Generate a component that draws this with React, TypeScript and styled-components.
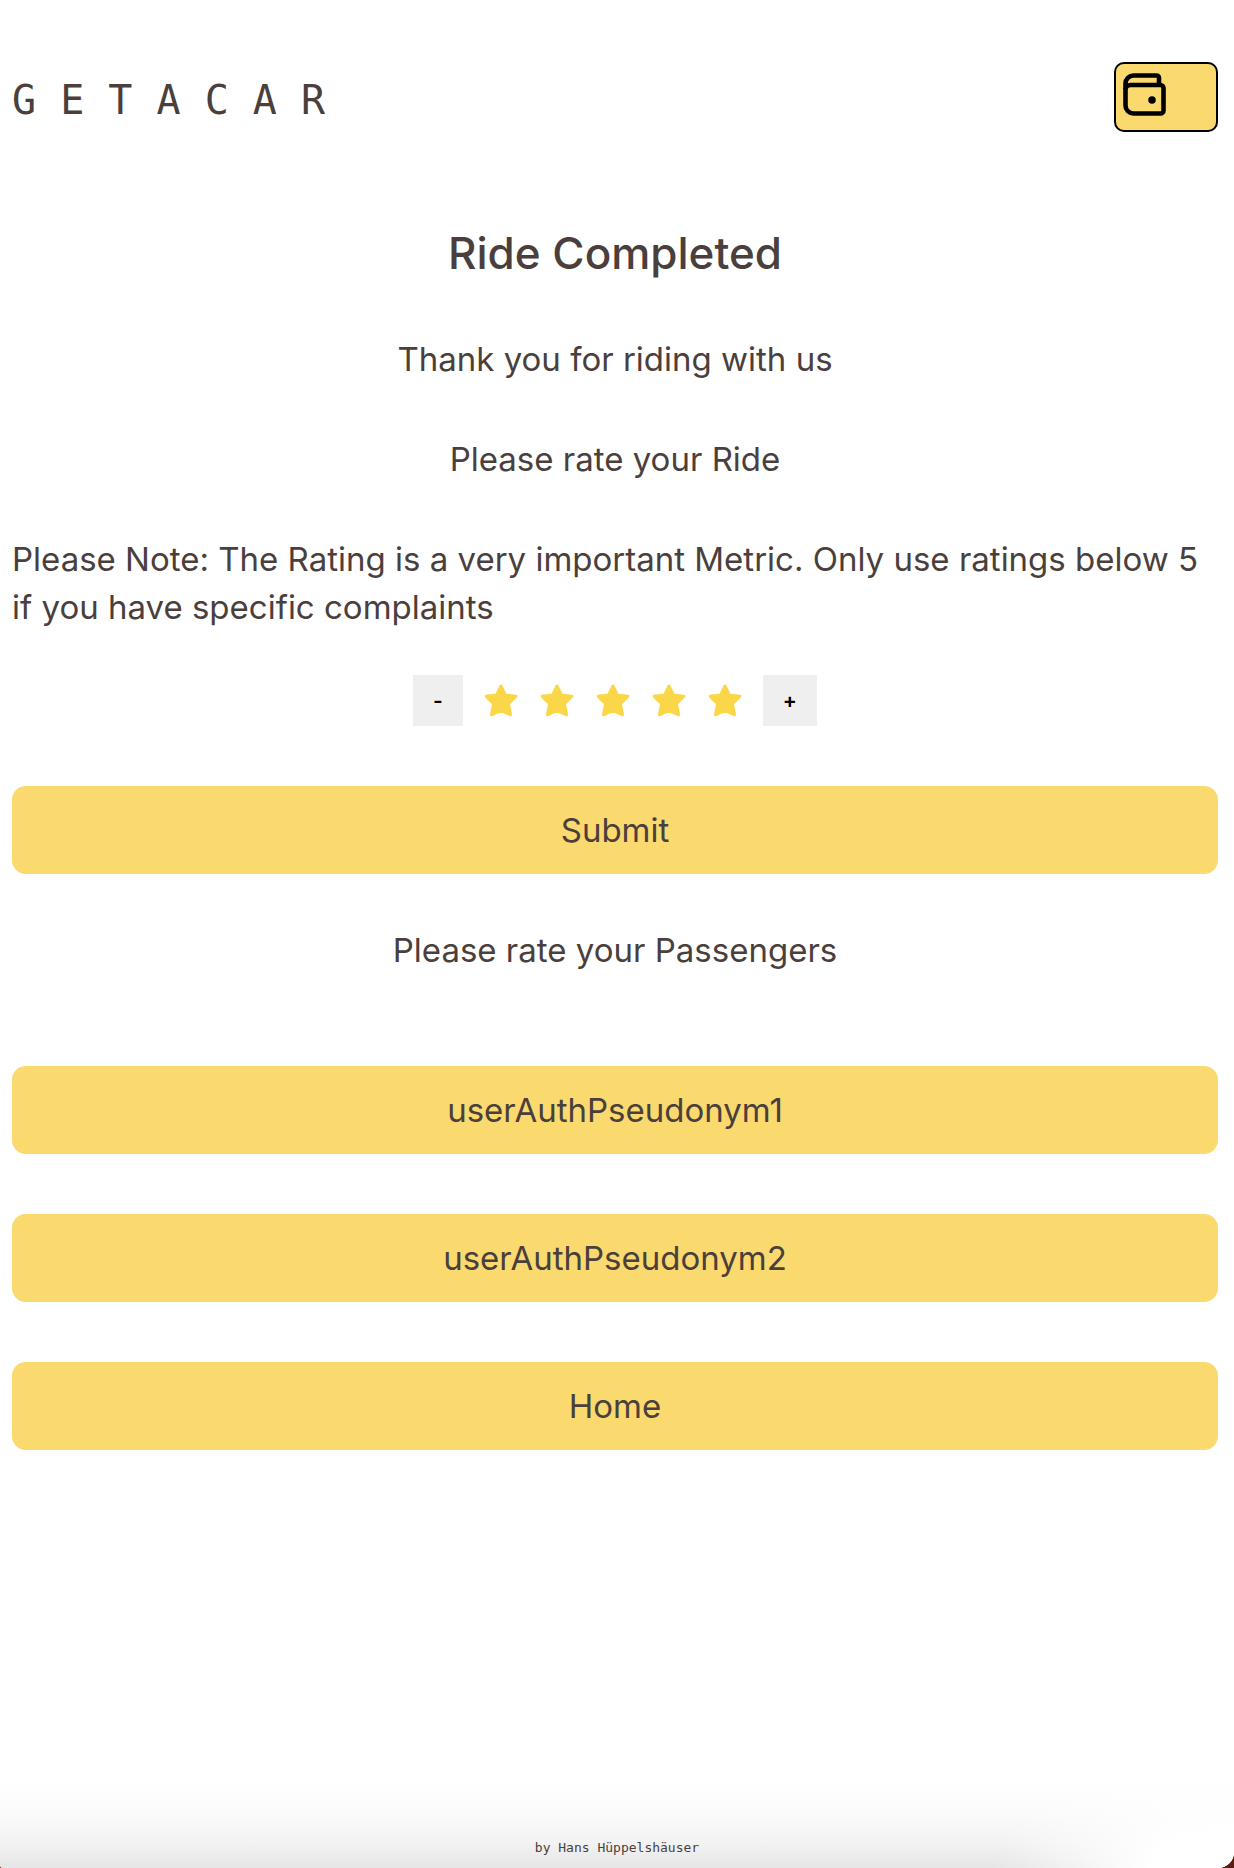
import React, { useState } from 'react';
import styled, { createGlobalStyle } from 'styled-components';

const ink = '#4a3f3d';
const yellow = '#fad96f';

const GlobalStyle = createGlobalStyle`
  *, *::before, *::after { box-sizing: border-box; }
  body {
    margin: 0;
    background: #5c1d12;
    color: ${ink};
    font-family: Inter, 'Open Sans', sans-serif;
    font-size: 33px;
    line-height: 48px;
  }
`;

const Page = styled.div`
  display: flex;
  flex-direction: column;
  min-height: 100vh;
  padding: 62px 16px 0 12px;
  background: #fff;
  border-bottom-right-radius: 16px;
  border-bottom-left-radius: 3px;
  overflow: hidden;
`;

const Header = styled.header`
  display: flex;
  align-items: center;
  justify-content: space-between;
  margin-bottom: 91px;
`;

const Logo = styled.div`
  padding-top: 6px;
  font-family: 'DejaVu Sans Mono', monospace;
  font-size: 40px;
  line-height: 48px;
`;

const WalletButton = styled.button`
  display: flex;
  width: 104px;
  height: 70px;
  padding: 8px 6px;
  border: 2px solid #000;
  border-radius: 10px;
  background: ${yellow};
  color: #000;
  cursor: pointer;
`;

const Main = styled.main`
  display: flex;
  flex-direction: column;
  flex: 1;
`;

const Title = styled.h1`
  margin: 0 0 52px;
  font-size: 44px;
  font-weight: 500;
  line-height: 60px;
  text-align: center;
`;

const Message = styled.p<{ $space?: number }>`
  margin: 0 0 ${(p) => p.$space ?? 52}px;
  text-align: center;
`;

const Note = styled.p`
  margin: 0 0 44px;
`;

const Rating = styled.div`
  display: flex;
  align-items: center;
  justify-content: center;
  gap: 10px;
  margin-bottom: 60px;
`;

const StepButton = styled.button`
  height: 51px;
  padding: 0 20px;
  border: 0;
  background: #efefef;
  color: #000;
  font: 600 21px/48px Inter, sans-serif;
  cursor: pointer;
`;

const Stars = styled.div`
  display: flex;
`;

const StarSlot = styled.span`
  display: flex;
  justify-content: center;
  width: 56px;
`;

const Action = styled.button`
  width: 100%;
  padding: 20px;
  border: 0;
  border-radius: 14px;
  background: ${yellow};
  color: ${ink};
  font: inherit;
  cursor: pointer;
`;

const ActionList = styled.div`
  display: flex;
  flex-direction: column;
  gap: 60px;
`;

const SubmitArea = styled.div`
  margin-bottom: 52px;
`;

const Footer = styled.footer`
  display: flex;
  align-items: flex-end;
  justify-content: center;
  height: 90px;
  margin: 0 -16px 0 -12px;
  padding-bottom: 10px;
  background:
    radial-gradient(ellipse 240px 110px at 100% 100%, #fff 35%, rgba(255, 255, 255, 0) 100%),
    linear-gradient(to bottom, #fff 0%, #fbfbfb 40%, #f3f3f3 70%, #e6e6e6 100%);
  font-family: 'DejaVu Sans Mono', monospace;
  font-size: 13px;
  line-height: 20px;
`;

function WalletIcon() {
  return (
    <svg width="46" height="46" viewBox="0 0 46 46" fill="none" stroke="currentColor" strokeWidth="4.600" aria-hidden="true">
      <path d="M3.500 17V11.500A8 8 0 0 1 11.500 3.500H34.500a2.500 2.500 0 0 1 2.500 2.500V13" />
      <path d="M3.500 18a5 5 0 0 1 5-5H38.500a3 3 0 0 1 3 3V38.500a3 3 0 0 1-3 3H11.500a8 8 0 0 1-8-8V16" />
      <circle cx="30" cy="28" r="3.800" fill="currentColor" stroke="none" />
    </svg>
  );
}

function Star({ filled }: { filled: boolean }) {
  return (
    <svg width="34" height="33" viewBox="0 0 34 33" aria-hidden="true">
      <path
        d="M17 2 L21.300 11 L32 12.200 L24.500 19.800 L26.500 30.800 L17 26.500 L7.500 30.800 L9.500 19.800 L2 12.200 L12.700 11 Z"
        fill={filled ? '#fad748' : 'none'}
        stroke="#fad748"
        strokeWidth="3"
        strokeLinejoin="round"
      />
    </svg>
  );
}

export default function App() {
  const [rating, setRating] = useState(5);
  return (
    <>
      <GlobalStyle />
      <Page>
        <Header>
          <Logo>G E T A C A R</Logo>
          <WalletButton type="button" aria-label="Wallet">
            <WalletIcon />
          </WalletButton>
        </Header>
        <Main>
          <Title>Ride Completed</Title>
          <Message>Thank you for riding with us</Message>
          <Message>Please rate your Ride</Message>
          <Note>
            Please Note: The Rating is a very important Metric. Only use ratings below 5 if you have specific complaints
          </Note>
          <Rating>
            <StepButton type="button" onClick={() => setRating(Math.max(1, rating - 1))}>-</StepButton>
            <Stars role="img" aria-label={`${rating} of 5`}>
              {[1, 2, 3, 4, 5].map((n) => (
                <StarSlot key={n}>
                  <Star filled={n <= rating} />
                </StarSlot>
              ))}
            </Stars>
            <StepButton type="button" onClick={() => setRating(Math.min(5, rating + 1))}>+</StepButton>
          </Rating>
          <SubmitArea>
            <Action type="button">Submit</Action>
          </SubmitArea>
          <Message $space={92}>Please rate your Passengers</Message>
          <ActionList>
            <Action type="button">userAuthPseudonym1</Action>
            <Action type="button">userAuthPseudonym2</Action>
            <Action type="button">Home</Action>
          </ActionList>
        </Main>
        <Footer>by Hans Hüppelshäuser</Footer>
      </Page>
    </>
  );
}
